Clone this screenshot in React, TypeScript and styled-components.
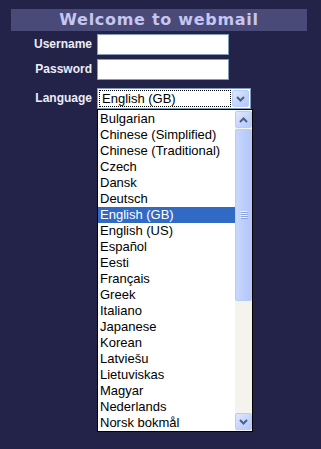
import React from "react";
import styled, { createGlobalStyle } from "styled-components";

const GlobalStyle = createGlobalStyle`
	html, body {
		margin: 0;
		padding: 0;
		background: #23234a;
	}
`;

const Page = styled.div`
	width: 321px;
	height: 449px;
	background: #23234a;
	padding-top: 9px;
	box-sizing: border-box;
	font-family: "Liberation Sans", Arial, sans-serif;
`;

const Header = styled.div`
	margin: 0 14px 0 11px;
	height: 22px;
	background: #4a4a78;
	color: #c6c6f0;
	font-family: "DejaVu Sans", Verdana, sans-serif;
	font-weight: bold;
	font-size: 16px;
	letter-spacing: 0.7px;
	line-height: 22px;
	text-align: center;
`;

const Form = styled.div`
	display: grid;
	grid-template-columns: 92px auto;
	column-gap: 5px;
	margin-top: 3px;
	align-items: start;
`;

const Label = styled.div<{ $top?: number }>`
	color: #ececf4;
	font-weight: bold;
	font-size: 12px;
	text-align: right;
	line-height: 21px;
	margin-top: ${({ $top }) => $top ?? 0}px;
`;

const Field = styled.div<{ $top?: number }>`
	margin-top: ${({ $top }) => $top ?? 0}px;
`;

const TextInput = styled.div`
	width: 132px;
	height: 21px;
	box-sizing: border-box;
	background: #fff;
	border: 1px solid #7f9db9;
`;

const Select = styled.div`
	width: 154px;
	height: 21px;
	box-sizing: border-box;
	background: #fff;
	border: 1px solid #7f9db9;
	display: flex;
	align-items: stretch;
	padding: 1px;
	gap: 1px;
`;

const SelectValue = styled.div`
	flex: 1;
	border: 1px dotted #000;
	font-size: 13px;
	line-height: 15px;
	padding-left: 2px;
	color: #000;
`;

const XpButton = styled.div`
	width: 17px;
	box-sizing: border-box;
	border: 1px solid #b9cdf6;
	border-radius: 2px;
	background: linear-gradient(135deg, #dfe8fe 0%, #c3d3fd 60%, #b5c8fb 100%);
	display: flex;
	align-items: center;
	justify-content: center;
`;

const ScrollBtn = styled(XpButton)`
	height: 17px;
`;

const List = styled.div`
	width: 156px;
	height: 323px;
	box-sizing: border-box;
	border: 1px solid #000;
	background: #fff;
	display: flex;
`;

const Options = styled.div`
	flex: 1;
	padding-top: 1px;
	overflow: hidden;
`;

const Option = styled.div<{ $selected?: boolean }>`
	height: 16px;
	line-height: 16px;
	font-size: 13px;
	padding-left: 2px;
	white-space: nowrap;
	color: ${({ $selected }) => ($selected ? "#fff" : "#000")};
	background: ${({ $selected }) => ($selected ? "#316ac5" : "transparent")};
`;

const Scrollbar = styled.div`
	width: 17px;
	background: #f4f3ee;
	display: flex;
	flex-direction: column;
	padding: 1px 0;
`;

const Thumb = styled(XpButton)`
	height: 172px;
	margin-top: 1px;
	background: linear-gradient(90deg, #c9d7fc 0%, #bccefb 50%, #b4c7fa 100%);
`;

const Track = styled.div`
	flex: 1;
`;

const Grip = () => (
	<svg width="8" height="8" viewBox="0 0 8 8">
		{[0, 2, 4, 6].map((y) => (
			<line key={y} x1="0.5" x2="7.5" y1={y + 0.5} y2={y + 0.5} stroke="#eef2fd" strokeWidth="1" />
		))}
		{[1, 3, 5, 7].map((y) => (
			<line key={y} x1="1" x2="8" y1={y + 0.5} y2={y + 0.5} stroke="#8ca4e0" strokeWidth="1" />
		))}
	</svg>
);

const Chevron = ({ up }: { up?: boolean }) => (
	<svg width="9" height="6" viewBox="0 0 9 6">
		<path
			d={up ? "M1 5 L4.5 1.5 L8 5" : "M1 1 L4.5 4.5 L8 1"}
			fill="none"
			stroke="#4d6185"
			strokeWidth="2"
		/>
	</svg>
);

const languages = [
	"Bulgarian",
	"Chinese (Simplified)",
	"Chinese (Traditional)",
	"Czech",
	"Dansk",
	"Deutsch",
	"English (GB)",
	"English (US)",
	"Español",
	"Eesti",
	"Français",
	"Greek",
	"Italiano",
	"Japanese",
	"Korean",
	"Latviešu",
	"Lietuviskas",
	"Magyar",
	"Nederlands",
	"Norsk bokmål",
];

export default function App() {
	return (
		<Page>
			<GlobalStyle />
			<Header>Welcome to webmail</Header>
			<Form>
				<Label>Username</Label>
				<Field>
					<TextInput />
				</Field>
				<Label $top={4}>Password</Label>
				<Field $top={4}>
					<TextInput />
				</Field>
				<Label $top={8}>Language</Label>
				<Field $top={8}>
					<Select>
						<SelectValue>English (GB)</SelectValue>
						<XpButton>
							<Chevron />
						</XpButton>
					</Select>
					<List>
						<Options>
							{languages.map((l) => (
								<Option key={l} $selected={l === "English (GB)"}>
									{l}
								</Option>
							))}
						</Options>
						<Scrollbar>
							<ScrollBtn>
								<Chevron up />
							</ScrollBtn>
							<Thumb>
								<Grip />
							</Thumb>
							<Track />
							<ScrollBtn>
								<Chevron />
							</ScrollBtn>
						</Scrollbar>
					</List>
				</Field>
			</Form>
		</Page>
	);
}
